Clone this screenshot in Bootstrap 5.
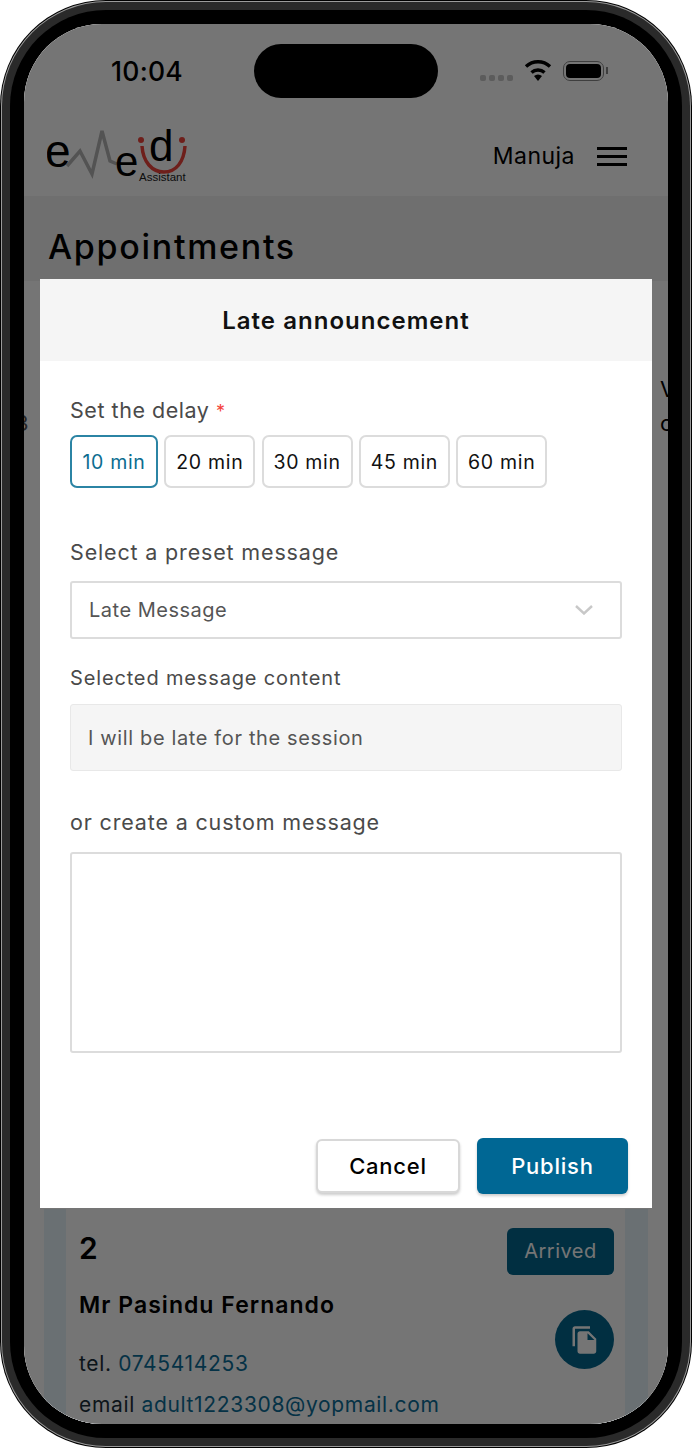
<!DOCTYPE html>
<html lang="en">
<head>
  <meta charset="UTF-8" />
  <meta name="viewport" content="width=device-width, initial-scale=1.0"/>
  <title>Late announcement</title>
  <link href="https://cdn.jsdelivr.net/npm/bootstrap@5.3.3/dist/css/bootstrap.min.css" rel="stylesheet">
  <style>
    html, body { margin: 0; background: #fff; }
    body { width: 692px; height: 1448px; overflow: hidden; font-family: Inter, "Liberation Sans", sans-serif; letter-spacing: .03em; }

    .shell { width: 692px; height: 1448px; padding: 1px; border-radius: 106px; background: #000; }
    .shell-rim { height: 100%; padding: 1px; border-radius: 105px; background: #9a9a9a; }
    .shell-band { height: 100%; padding: 8px; border-radius: 104px; background: #2a2a2a; }
    .bezel { height: 100%; padding: 14px; border-radius: 96px; background: #000; }
    .screen { position: relative; height: 100%; border-radius: 78px; overflow: hidden; background: #fff; }

    .status-bar { height: 94px; padding-top: 20px; }
    .status-time { width: 230px; padding-left: 87px; font-size: 26.5px; font-weight: 500; line-height: 54px; letter-spacing: .01em; color: #000; }
    .island { width: 184px; height: 54px; border-radius: 27px; background: #000; }
    .status-icons { padding: 16px 0 0 42px; gap: 11px; }
    .signal-dots { gap: 3px; padding-top: 15px; }
    .signal-dots i { width: 6px; height: 6px; border-radius: 2px; background: #c8c8c8; }
    .battery { width: 41px; height: 20px; margin-top: 1px; padding: 2px; border: 1px solid #888; border-radius: 7px; }
    .battery i { display: block; height: 100%; border-radius: 4px; background: #000; }
    .battery-tip { width: 2px; height: 7px; margin: 7px 0 0 -9px; background: #888; }

    .top-head { height: 78px; padding: 0 41px 2px 23px; }
    .user-name { font-size: 23px; line-height: 1; color: #000; }
    .burger { width: 30px; gap: 5px; margin-left: 22px; }
    .burger i { height: 3px; background: #000; }

    .page-area { flex: 1; min-height: 0; background: #fff; }
    .title-band { height: 85px; padding: 31px 0 0 24px; background: #f2f2f2; }
    .page-title { margin: 0; font-size: 34px; font-weight: 500; line-height: 40px; letter-spacing: .05em; color: #000; }
    .cut-row { margin-top: 91px; font-size: 22px; line-height: 34px; color: #000; }
    .cut-left { margin: 34px 0 0 -9px; color: #555; }
    .cut-right { margin-right: -14px; width: 22px; }

    .appt-card { margin: auto 20px -1px; padding: 0 23px 0 22px; background: #e8f3fa; }
    .appt-inner { padding: 20px 11px 0 13px; background: #fff; }
    .appt-num { font-size: 30px; font-weight: 600; line-height: 38px; color: #000; }
    .appt-name { margin-top: 20px; font-size: 23px; font-weight: 600; line-height: 36px; letter-spacing: .045em; color: #000; }
    .appt-line { font-size: 21px; line-height: 41px; letter-spacing: .0315em; color: #1c2f3a; }
    .appt-line a { color: #0b6d98; text-decoration: none; }
    .appt-tel { margin-top: 20px; }
    .arrived { width: 107px; height: 47px; margin-top: -1px; border-radius: 6px; background: #03678f; color: #fff; font-size: 20px; line-height: 47px; text-align: center; }
    .fab { width: 59px; height: 59px; margin-top: 35px; border-radius: 50%; background: #03678f; }

    .dim-layer { position: absolute; inset: 0; background: rgba(0, 0, 0, .54); }
    .dialog-box { position: absolute; top: 255px; left: 16px; width: 612px; height: 929px; border: 0; border-radius: 0; background: #fff; }
    .dialog-head { height: 82px; padding-top: 1px; background: #f5f5f5; font-size: 24px; font-weight: 600; letter-spacing: .043em; color: #111; }
    .dialog-body { padding: 34px 30px 0; color: #4a4a4a; }
    .field-label { margin: 0; font-size: 21.5px; line-height: 30px; letter-spacing: .039em; color: #4a4a4a; }
    .field-label.slim { font-size: 20px; letter-spacing: .0425em; }
    .field-label.first { letter-spacing: .025em; }
    .star { color: #f4433c; font-size: 18px; }
    .delay-row { gap: 6.3px; margin: 8px 0 49px; }
    .delay-btn { height: 53px; padding: 2px 0 0; border: 2px solid #dcdcdc; border-radius: 7px; background: #fff; color: #111; font-size: 19.5px; letter-spacing: .035em; }
    .delay-btn.w1 { width: 88px; }
    .delay-btn.w2 { width: 91px; }
    .delay-btn.on { border-color: #2b84a4; color: #0b6d90; }
    .preset-select, .custom-text { border: 2px solid #dcdcdc; border-radius: 3px; box-shadow: none; color: #555; }
    .preset-select { height: 58px; margin-top: 14px; padding: 0 17px; font-size: 20px; letter-spacing: .025em; background-image: url("data:image/svg+xml,%3csvg xmlns='http://www.w3.org/2000/svg' viewBox='0 0 18 10'%3e%3cpath fill='none' stroke='%23c8c8c8' stroke-width='2.4' d='M1 1l8 7.5L17 1'/%3e%3c/svg%3e"); background-position: right 27px center; background-size: 18px 10px; }
    .msg-box { height: 67px; margin-top: 11px; padding: 0 17px; border: 1px solid #e8e8e8; border-radius: 3px; background: #f5f5f5; font-size: 20px; line-height: 67px; letter-spacing: .032em; color: #555; }
    .custom-text { height: 201px; margin-top: 15px; resize: none; }
    .gap-a { margin-top: 24px; }
    .gap-b { margin-top: 36px; }
    .dialog-foot { margin-top: auto; padding: 0 24px 14px; gap: 17px; }
    .foot-btn { height: 54px; padding: 0; border-radius: 6px; font-size: 22px; font-weight: 500; letter-spacing: .035em; }
    .foot-cancel { width: 144px; border: 2px solid #d8d8d8; background: #fff; color: #000; box-shadow: 0 2px 3px rgba(0, 0, 0, .2); }
    .foot-publish { width: 151px; height: 56px; border: 0; background: #006794; color: #fff; box-shadow: 0 2px 3px rgba(0, 0, 0, .2); }
  </style>
</head>
<body>
  <div class="shell"><div class="shell-rim"><div class="shell-band"><div class="bezel">
    <div class="screen d-flex flex-column">

      <div class="status-bar d-flex bg-white">
        <div class="status-time">10:04</div>
        <div class="island"></div>
        <div class="status-icons d-flex align-items-start">
          <div class="signal-dots d-flex"><i></i><i></i><i></i><i></i></div>
          <svg width="28" height="21" viewBox="0 0 28 21">
            <path d="M14 21l-4-5a6 6 0 0 1 8 0z" fill="#000"/>
            <path d="M7.5 12.5a9.5 9.5 0 0 1 13 0M2 6.5a17.5 17.5 0 0 1 24 0" fill="none" stroke="#000" stroke-width="3.4"/>
          </svg>
          <div class="battery"><i></i></div>
          <div class="battery-tip"></div>
        </div>
      </div>

      <div class="top-head d-flex align-items-center justify-content-between bg-white">
        <svg width="142" height="60" viewBox="0 0 142 60">
          <text x="-2" y="41" font-family="Liberation Sans" font-size="46" fill="#000" letter-spacing="0">e</text>
          <polyline points="20,40 33,25 45,48 55,5 63,35 70,38" fill="none" stroke="#b5b5b5" stroke-width="3.5"/>
          <text x="68" y="50" font-family="Liberation Sans" font-size="42" fill="#000" letter-spacing="0">e</text>
          <text x="102" y="35" font-family="Liberation Sans" font-size="44" fill="#000" letter-spacing="0">d</text>
          <path d="M95 20c1 16 10 26 22 26s20-10 21-26" fill="none" stroke="#f0453c" stroke-width="3.5"/>
          <circle cx="94" cy="14" r="3" fill="#f0453c"/>
          <circle cx="135" cy="14" r="3" fill="#f0453c"/>
          <text x="92" y="55" font-family="Liberation Sans" font-size="11.5" fill="#222" letter-spacing="0">Assistant</text>
        </svg>
        <div class="d-flex align-items-center">
          <span class="user-name">Manuja</span>
          <div class="burger d-flex flex-column"><i></i><i></i><i></i></div>
        </div>
      </div>

      <div class="page-area d-flex flex-column">
        <div class="title-band"><h1 class="page-title">Appointments</h1></div>
        <div class="cut-row d-flex justify-content-between">
          <div class="cut-left">3</div>
          <div class="cut-right"><div>V</div><div>c</div></div>
        </div>

        <div class="appt-card">
          <div class="appt-inner d-flex justify-content-between">
            <div>
              <div class="appt-num">2</div>
              <div class="appt-name">Mr Pasindu Fernando</div>
              <div class="appt-line appt-tel">tel. <a href="#">0745414253</a></div>
              <div class="appt-line">email <a href="#">adult1223308@yopmail.com</a></div>
            </div>
            <div class="d-flex flex-column align-items-end">
              <div class="arrived">Arrived</div>
              <div class="fab d-flex align-items-center justify-content-center">
                <svg width="30" height="30" viewBox="0 0 24 24"><path fill="#fff" d="M16 1H4c-1.1 0-2 .9-2 2v14h2V3h12V1zm-1 4l6 6v10c0 1.1-.9 2-2 2H7.99C6.89 23 6 22.1 6 21l.01-14c0-1.1.89-2 1.99-2h7zm-1 7h5.5L14 6.5V12z"/></svg>
              </div>
            </div>
          </div>
        </div>
      </div>

      <div class="dim-layer"></div>

      <div class="dialog-box modal-content">
        <div class="dialog-head d-flex align-items-center justify-content-center">Late announcement</div>
        <div class="dialog-body">
          <label class="field-label first">Set the delay <span class="star">*</span></label>
          <div class="delay-row d-flex">
            <button type="button" class="btn delay-btn w1 on">10 min</button>
            <button type="button" class="btn delay-btn w2">20 min</button>
            <button type="button" class="btn delay-btn w2">30 min</button>
            <button type="button" class="btn delay-btn w2">45 min</button>
            <button type="button" class="btn delay-btn w2">60 min</button>
          </div>
          <label class="field-label">Select a preset message</label>
          <select class="form-select preset-select"><option>Late Message</option></select>
          <label class="field-label slim gap-a">Selected message content</label>
          <div class="msg-box">I will be late for the session</div>
          <label class="field-label gap-b">or create a custom message</label>
          <textarea class="form-control custom-text"></textarea>
        </div>
        <div class="dialog-foot d-flex align-items-center justify-content-end">
          <button type="button" class="btn foot-btn foot-cancel">Cancel</button>
          <button type="button" class="btn foot-btn foot-publish">Publish</button>
        </div>
      </div>

    </div>
  </div></div></div></div>

  <script src="https://cdn.jsdelivr.net/npm/bootstrap@5.3.3/dist/js/bootstrap.bundle.min.js"></script>
</body>
</html>
